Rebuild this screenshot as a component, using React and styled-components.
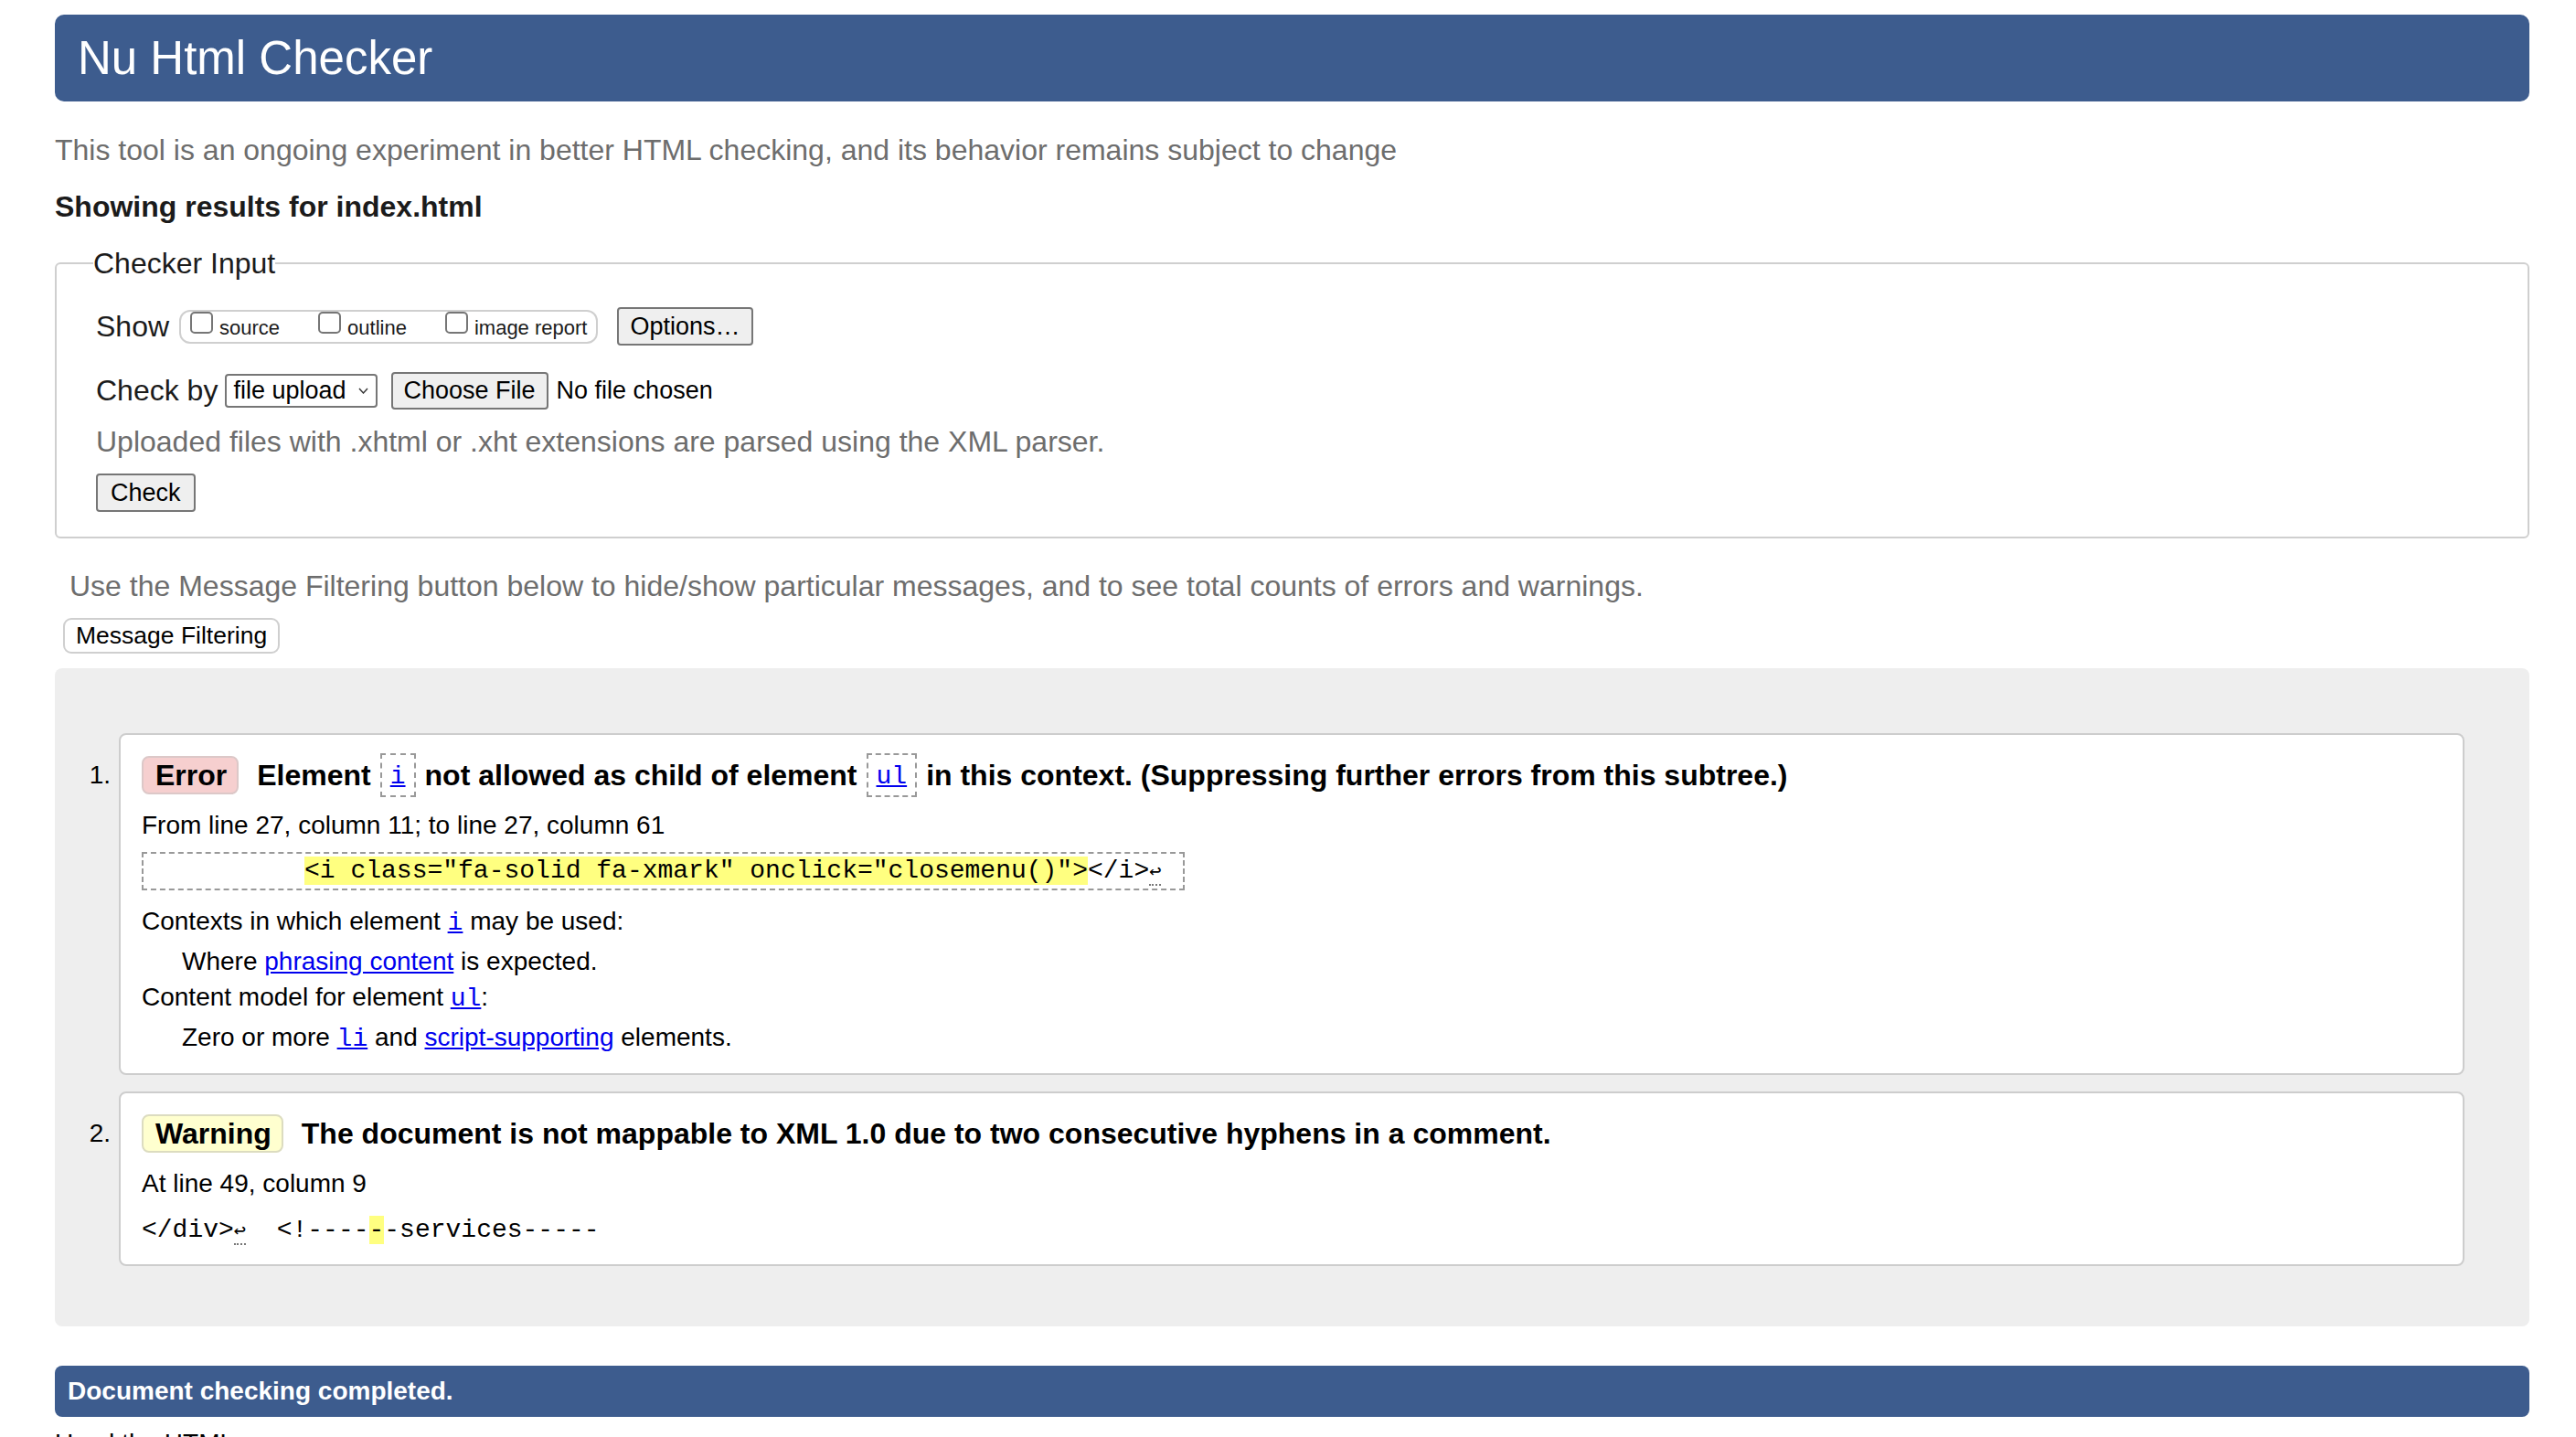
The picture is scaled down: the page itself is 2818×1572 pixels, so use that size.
import React from "react";
import styled, { createGlobalStyle } from "styled-components";

const sans = `"Liberation Sans", Arial, Helvetica, sans-serif`;
const mono = `"Liberation Mono", "Courier New", monospace`;

const GlobalStyle = createGlobalStyle`
  html, body {
    margin: 0;
    padding: 0;
    background: #fff;
  }
  body {
    font-family: ${sans};
    color: #000;
  }
`;

const Page = styled.div`
  padding: 16px 51px 40px 60px;
`;

const Header = styled.header`
  height: 95px;
  box-sizing: border-box;
  display: flex;
  align-items: center;
  padding: 0 25px;
  background: #3d5c8e;
  border-radius: 10px;
`;

const Title = styled.h1`
  margin: 0;
  font-size: 51px;
  font-weight: 400;
  line-height: 1;
  color: #fff;
`;

const Lead = styled.p`
  margin: ${(p) => p.top || 0}px 0 0 ${(p) => p.indent || 0}px;
  font-size: 32px;
  line-height: 38px;
  color: #6d6d6d;
`;

const ResultFor = styled.h2`
  margin: 24px 0 0;
  font-size: 32px;
  line-height: 38px;
  font-weight: 700;
  color: #1b1b1b;
`;

const Fieldset = styled.fieldset`
  margin: 24px 0 0;
  padding: 29px 0 27px 43px;
  border: 2px solid #cfcfcf;
  border-radius: 6px;
  min-width: 0;
`;

const Legend = styled.legend`
  margin-left: -3px;
  padding: 0;
  font-size: 32px;
  line-height: 38px;
  color: #1b1b1b;
`;

const Row = styled.div`
  display: flex;
  align-items: center;
  height: 42px;
  margin-top: ${(p) => p.top || 0}px;
`;

const Label = styled.span`
  font-size: 32px;
  color: #1b1b1b;
  margin-right: ${(p) => p.gap}px;
`;

const Toggles = styled.div`
  display: flex;
  align-items: flex-start;
  height: 37px;
  box-sizing: border-box;
  padding: 0 10px;
  border: 2px solid #cfcfcf;
  border-radius: 12px;
  margin-right: 21px;
`;

const Toggle = styled.label`
  display: flex;
  align-items: flex-start;
  margin-left: ${(p) => (p.first ? 0 : 42)}px;
`;

const Box = styled.input.attrs({ type: "checkbox" })`
  appearance: none;
  -webkit-appearance: none;
  margin: 0;
  width: 25px;
  height: 24px;
  box-sizing: border-box;
  border: 2px solid #767676;
  border-radius: 5px;
  background: #fff;
`;

const ToggleText = styled.span`
  margin: 5px 0 0 7px;
  font-size: 22px;
  line-height: 26px;
  color: #1b1b1b;
`;

const Button = styled.button`
  box-sizing: border-box;
  height: ${(p) => p.h || 42}px;
  padding: 0 ${(p) => p.pad || 12}px;
  font-family: ${sans};
  font-size: ${(p) => p.size || 27}px;
  color: #000;
  background: ${(p) => (p.plain ? "#fff" : "#efefef")};
  border: 2px solid ${(p) => (p.plain ? "#cfcfcf" : "#767676")};
  border-radius: ${(p) => (p.plain ? 9 : 4)}px;
  margin: ${(p) => p.margin || 0};
  display: inline-flex;
  align-items: center;
`;

const Select = styled.div`
  box-sizing: border-box;
  height: 37px;
  display: flex;
  align-items: center;
  padding: 0 8px 0 7px;
  border: 2px solid #767676;
  border-radius: 4px;
  background: #fff;
  font-size: 27px;
  margin-right: 15px;

  svg {
    margin-left: 13px;
  }
`;

const Hint = styled.span`
  font-size: 27px;
  margin-left: 9px;
`;

const Results = styled.ol`
  list-style: none;
  margin: 16px 0 0;
  padding: 71px 71px 66px 0;
  background: #eee;
  border-radius: 8px;
`;

const Item = styled.li`
  display: flex;
  & + & {
    margin-top: 18px;
  }
`;

const Num = styled.span`
  flex: 0 0 70px;
  box-sizing: border-box;
  padding: 29px 9px 0 0;
  text-align: right;
  font-size: 28px;
  line-height: 34px;
`;

const Card = styled.div`
  flex: 1;
  min-width: 0;
  background: #fff;
  border: 2px solid #cdcdcd;
  border-radius: 8px;
  padding: 20px 25px 20px 23px;
`;

const MsgHead = styled.p`
  margin: 0;
  display: flex;
  align-items: center;
  gap: 10px;
  min-height: 48px;
  font-size: 32px;
  font-weight: 700;
  white-space: nowrap;
`;

const Badge = styled.strong`
  line-height: 38px;
  padding: 0 11px 0 13px;
  border: 2px solid ${(p) => (p.kind === "error" ? "#dcc8c8" : "#dcdcc0")};
  border-radius: 8px;
  background: ${(p) => (p.kind === "error" ? "#f6cfcf" : "#ffffcf")};
  margin-right: 10px;
`;

const CodeRef = styled.span`
  display: inline-flex;
  align-items: center;
  box-sizing: border-box;
  height: 48px;
  padding: 3px 9px 0;
  border: 2px dashed #999;
`;

const Code = styled.a`
  font-family: ${mono};
  font-size: 28px;
  font-weight: 400;
  line-height: 1;
  color: #0000ee;
  text-decoration: underline;
`;

const Desc = styled.p`
  margin: 14px 0 0;
  font-size: 28px;
  line-height: 34px;
`;

const Extract = styled.p`
  width: fit-content;
  height: ${(p) => (p.boxed ? 42 : 34)}px;
  box-sizing: border-box;
  margin: ${(p) => (p.boxed ? 12 : 17)}px 0 0;
  padding: ${(p) => (p.boxed ? "2px 24px 2px 8px" : 0)};
  border: ${(p) => (p.boxed ? "2px dashed #999" : "none")};
  font-family: ${mono};
  font-size: 28px;
  line-height: 34px;
  white-space: pre;
`;

const Mark = styled.mark`
  background: #ffff80;
  color: #000;
`;

const Eol = styled.b`
  font-weight: 400;
  font-size: 22px;
  line-height: 20px;
  border-bottom: 2px dotted #777;
`;

const Defs = styled.dl`
  margin: 17px 0 2px;
  font-size: 28px;
  line-height: 34px;
`;

const Term = styled.dt`
  dd + & {
    margin-top: 5px;
  }
`;

const Def = styled.dd`
  margin: 10px 0 0 44px;
`;

const Link = styled.a`
  color: #0000ee;
  text-decoration: underline;
`;

const Done = styled.div`
  margin-top: 43px;
  height: 56px;
  box-sizing: border-box;
  display: flex;
  align-items: center;
  padding: 0 14px;
  background: #3d5c8e;
  border-radius: 8px;
  color: #fff;
  font-size: 28px;
  font-weight: 700;
`;

const Note = styled.p`
  margin: 12px 0 0;
  font-size: 28px;
  line-height: 34px;
`;

const Chevron = () => (
  <svg width="11" height="7" viewBox="0 0 11 7">
    <polyline points="1,1 5.5,6 10,1" fill="none" stroke="#333" strokeWidth="1.4" />
  </svg>
);

const options = ["source", "outline", "image report"];

export default function App() {
  return (
    <Page>
      <GlobalStyle />
      <Header>
        <Title>Nu Html Checker</Title>
      </Header>
      <Lead top={34}>
        This tool is an ongoing experiment in better HTML checking, and its behavior remains subject to change
      </Lead>
      <ResultFor>Showing results for index.html</ResultFor>

      <Fieldset>
        <Legend>Checker Input</Legend>
        <Row>
          <Label gap={11}>Show</Label>
          <Toggles>
            {options.map((o, i) => (
              <Toggle key={o} first={i === 0}>
                <Box />
                <ToggleText>{o}</ToggleText>
              </Toggle>
            ))}
          </Toggles>
          <Button>Options…</Button>
        </Row>
        <Row top={28}>
          <Label gap={8}>Check by</Label>
          <Select>
            file upload
            <Chevron />
          </Select>
          <Button h={41}>Choose File</Button>
          <Hint>No file chosen</Hint>
        </Row>
        <Lead top={16}>
          Uploaded files with .xhtml or .xht extensions are parsed using the XML parser.
        </Lead>
        <Row top={16}>
          <Button pad={14}>Check</Button>
        </Row>
      </Fieldset>

      <Lead top={33} indent={16}>
        Use the Message Filtering button below to hide/show particular messages, and to see total counts of errors and warnings.
      </Lead>
      <Button plain h={39} size={26.5} margin="16px 0 0 9px">
        Message Filtering
      </Button>

      <Results>
        <Item>
          <Num>1.</Num>
          <Card>
            <MsgHead>
              <Badge kind="error">Error</Badge>
              <span>Element</span>
              <CodeRef>
                <Code>i</Code>
              </CodeRef>
              <span>not allowed as child of element</span>
              <CodeRef>
                <Code>ul</Code>
              </CodeRef>
              <span>in this context. (Suppressing further errors from this subtree.)</span>
            </MsgHead>
            <Desc>From line 27, column 11; to line 27, column 61</Desc>
            <Extract boxed>
              {"          "}
              <Mark>{'<i class="fa-solid fa-xmark" onclick="closemenu()">'}</Mark>
              {"</i>"}
              <Eol>↩</Eol>
            </Extract>
            <Defs>
              <Term>
                Contexts in which element <Code>i</Code> may be used:
              </Term>
              <Def>
                Where <Link>phrasing content</Link> is expected.
              </Def>
              <Term>
                Content model for element <Code>ul</Code>:
              </Term>
              <Def>
                Zero or more <Code>li</Code> and <Link>script-supporting</Link> elements.
              </Def>
            </Defs>
          </Card>
        </Item>
        <Item>
          <Num>2.</Num>
          <Card>
            <MsgHead>
              <Badge kind="warning">Warning</Badge>
              <span>The document is not mappable to XML 1.0 due to two consecutive hyphens in a comment.</span>
            </MsgHead>
            <Desc>At line 49, column 9</Desc>
            <Extract>
              {"</div>"}
              <Eol>↩</Eol>
              {"  <!----"}
              <Mark>-</Mark>
              {"-services-----"}
            </Extract>
          </Card>
        </Item>
      </Results>

      <Done>Document checking completed.</Done>
      <Note>Used the HTML parser.</Note>
    </Page>
  );
}
